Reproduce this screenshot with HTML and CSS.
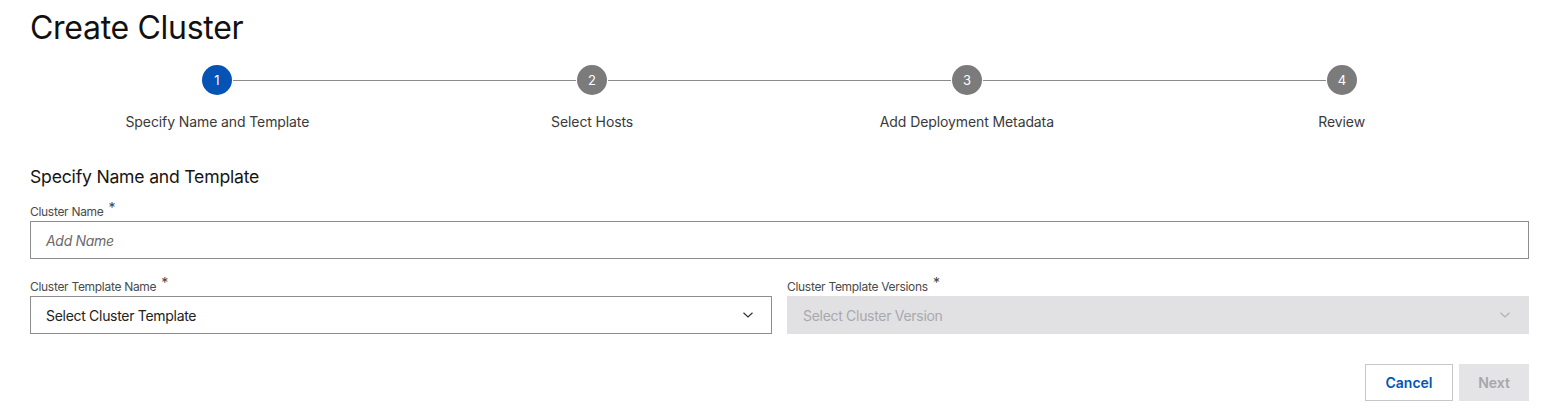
FILE: index.html
```html
<!DOCTYPE html>
<html lang="en">
<head>
<meta charset="utf-8">
<title>Create Cluster</title>
<link rel="stylesheet" href="styles.css">
</head>
<body>
<div class="page">
  <h1 class="title">Create Cluster</h1>

  <div class="stepper">
    <div class="track">
      <span class="circle active">1</span>
      <span class="line"></span>
      <span class="circle">2</span>
      <span class="line"></span>
      <span class="circle">3</span>
      <span class="line"></span>
      <span class="circle">4</span>
    </div>
    <div class="labels">
      <span>Specify Name and Template</span>
      <span>Select Hosts</span>
      <span>Add Deployment Metadata</span>
      <span>Review</span>
    </div>
  </div>

  <h2 class="section">Specify Name and Template</h2>

  <div class="field">
    <label class="label">Cluster Name <span class="req">*</span></label>
    <div class="input"><span class="placeholder">Add Name</span></div>
  </div>

  <div class="row">
    <div class="field">
      <label class="label">Cluster Template Name <span class="req">*</span></label>
      <div class="select">
        <span class="value">Select Cluster Template</span>
        <svg class="chev" width="12" height="8" viewBox="0 0 12 8"><path d="M1.5 1.8 L6 6 L10.5 1.8" fill="none" stroke="#333" stroke-width="1.2"/></svg>
      </div>
    </div>
    <div class="field">
      <label class="label">Cluster Template Versions <span class="req">*</span></label>
      <div class="select disabled">
        <span class="value">Select Cluster Version</span>
        <svg class="chev" width="12" height="8" viewBox="0 0 12 8"><path d="M1.5 1.8 L6 6 L10.5 1.8" fill="none" stroke="#b0b0b4" stroke-width="1.2"/></svg>
      </div>
    </div>
  </div>

  <div class="actions">
    <button class="btn cancel">Cancel</button>
    <button class="btn next">Next</button>
  </div>
</div>
</body>
</html>
```

FILE: styles.css
```css
* { box-sizing: border-box; }
html, body { margin: 0; padding: 0; background: #fff; }
body {
  font-family: Inter, "Noto Sans", "Liberation Sans", sans-serif;
  color: #151515;
}
.page {
  padding: 8px 13px 0 30px;
  display: flex;
  flex-direction: column;
}
.title {
  margin: 0;
  font-size: 32px;
  font-weight: 400;
  line-height: 40px;
  letter-spacing: -0.3px;
  color: #111;
}
.stepper {
  margin-top: 17px;
  display: flex;
  flex-direction: column;
}
.track {
  display: flex;
  align-items: center;
  padding: 0 172px;
  height: 30px;
}
.circle {
  width: 30px;
  height: 30px;
  border-radius: 50%;
  background: #7b7b7b;
  color: #fff;
  font-size: 13px;
  display: flex;
  align-items: center;
  justify-content: center;
  flex: none;
}
.circle.active { background: #0553b5; }
.line {
  flex: 1;
  height: 1px;
  background: #8a8a8a;
  margin: 0 1px;
}
.labels {
  display: grid;
  grid-template-columns: repeat(4, 1fr);
  margin-top: 17px;
  font-size: 14px;
  color: #3a3a3a;
  text-align: center;
  line-height: 20px;
  letter-spacing: -0.1px;
}
.section {
  margin: 33px 0 0 0;
  font-size: 17.6px;
  font-weight: 400;
  line-height: 24px;
  color: #151515;
  letter-spacing: -0.2px;
}
.field {
  display: flex;
  flex-direction: column;
}
.section + .field { margin-top: 14px; }
.label {
  font-size: 12px;
  color: #4a4a4a;
  line-height: 16px;
  height: 18px;
  letter-spacing: -0.3px;
}
.req {
  font-size: 14px;
  color: #444;
  margin-left: 2px;
  position: relative;
  top: -3px;
}
.input, .select {
  height: 38px;
  border: 1px solid #8d8d8d;
  display: flex;
  align-items: center;
  padding: 0 15px;
  font-size: 14px;
}
.placeholder {
  font-style: italic;
  color: #6a6a6a;
  letter-spacing: -0.3px;
}
.row {
  display: grid;
  grid-template-columns: 1fr 1fr;
  gap: 15px;
  margin-top: 19px;
}
.select { justify-content: space-between; padding-right: 17px; }
.value { color: #222; letter-spacing: -0.3px; }
.select.disabled {
  background: #e1e1e3;
  border-color: #e1e1e3;
}
.select.disabled .value { color: #a9a9ad; }
.actions {
  display: flex;
  justify-content: flex-end;
  gap: 6px;
  margin-top: 30px;
}
.btn {
  height: 37px;
  font-family: inherit;
  font-size: 14px;
  font-weight: 600;
  border-radius: 0;
  cursor: pointer;
}
.cancel {
  width: 88px;
  background: #fff;
  border: 1px solid #c7c7c7;
  color: #0553b5;
}
.next {
  width: 70px;
  background: #e4e4e6;
  border: none;
  color: #a7a7ab;
}
```
